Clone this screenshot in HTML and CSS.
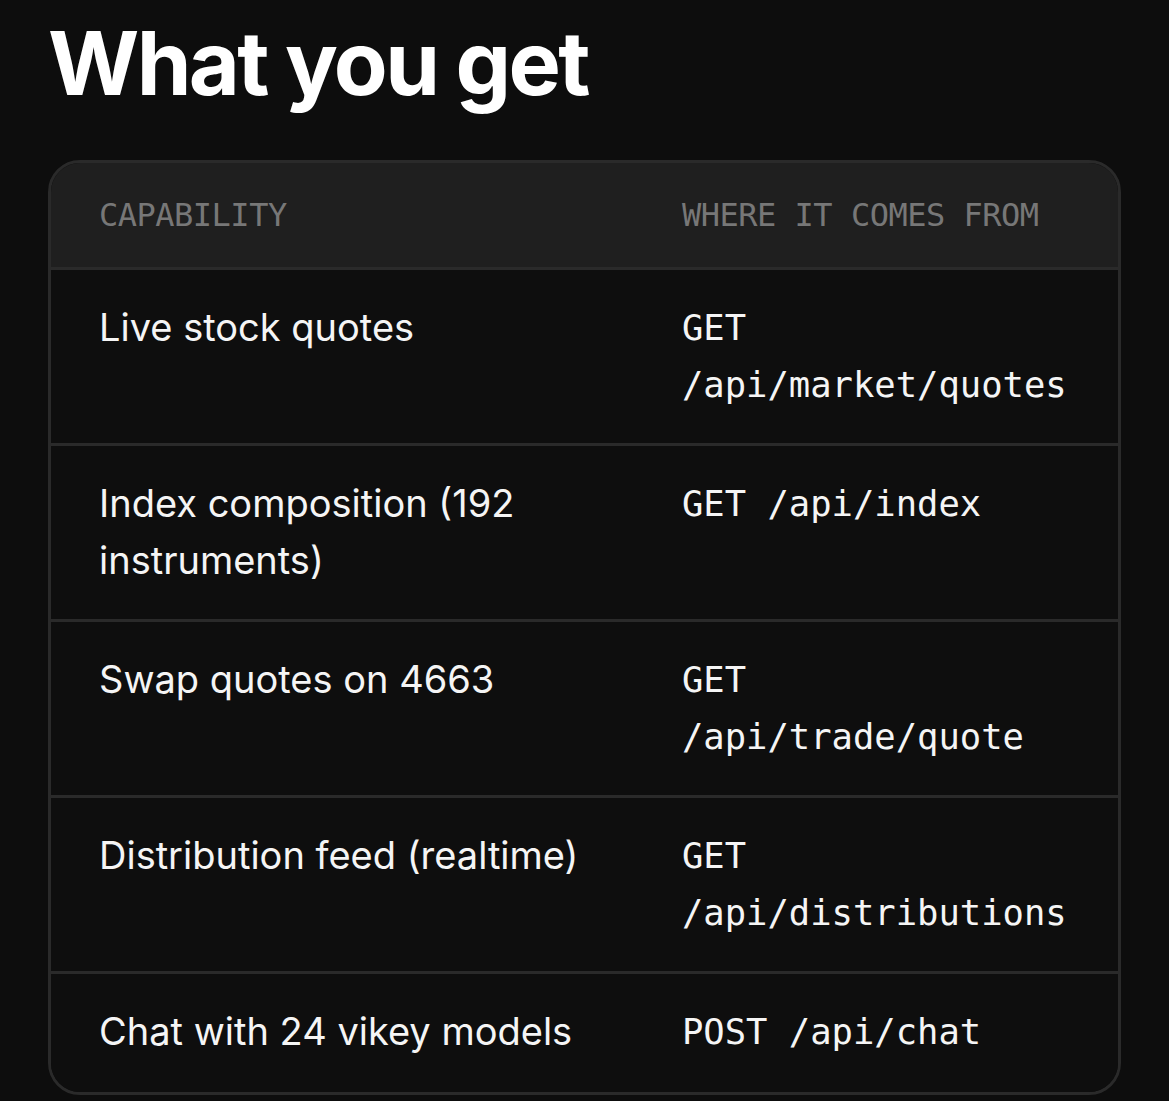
FILE: index.html
```html
<!DOCTYPE html>
<html lang="en">
<head>
    <meta charset="UTF-8">
    <meta name="viewport" content="width=device-width, initial-scale=1.0">
    <title>What you get</title>
    <link rel="stylesheet" href="styles.css">
</head>
<body>

    <div class="container">
        <h1>What you get</h1>

        <div class="table-wrap">
            <table class="caps">
                <thead>
                    <tr>
                        <th class="col-cap">Capability</th>
                        <th class="col-src">Where it comes from</th>
                    </tr>
                </thead>
                <tbody>
                    <tr>
                        <td>Live stock quotes</td>
                        <td class="code">GET /api/market/quotes</td>
                    </tr>
                    <tr>
                        <td>Index composition (192 instruments)</td>
                        <td class="code">GET /api/index</td>
                    </tr>
                    <tr>
                        <td>Swap quotes on 4663</td>
                        <td class="code">GET /api/trade/quote</td>
                    </tr>
                    <tr>
                        <td>Distribution feed (realtime)</td>
                        <td class="code">GET /api/distributions</td>
                    </tr>
                    <tr class="last">
                        <td>Chat with 24 vikey models</td>
                        <td class="code">POST /api/chat</td>
                    </tr>
                </tbody>
            </table>
        </div>
    </div>

</body>
</html>
```

FILE: styles.css
```css
body {
    margin: 0;
    background-color: #0d0d0d;
    color: #f5f5f5;
    font-family: 'Inter', 'Noto Sans', sans-serif;
}

.container {
    padding: 11px 48px 0 48px;
}

h1 {
    margin: 0 0 43px 0;
    font-size: 88px;
    font-weight: 700;
    line-height: 1.2;
    letter-spacing: -0.03em;
    color: #ffffff;
}

.table-wrap {
    border: 3px solid #2a2a2a;
    border-radius: 32px;
    overflow: hidden;
}

.caps {
    width: 100%;
    border-collapse: collapse;
    table-layout: fixed;
}

th, td {
    box-sizing: border-box;
}

.col-cap {
    width: 581px;
}

th {
    background-color: #1f1f1f;
    color: #777;
    font-family: 'DejaVu Sans Mono', 'Liberation Mono', monospace;
    font-size: 32px;
    font-weight: 400;
    letter-spacing: -0.5px;
    text-transform: uppercase;
    text-align: left;
    line-height: 48px;
    padding: 28px 40px 28px 48px;
}

td {
    vertical-align: top;
    font-size: 38px;
    line-height: 57px;
    padding: 29px 40px 30px 48px;
    border-top: 3px solid #2a2a2a;
    background-color: #0e0e0e;
}

td.code {
    font-family: 'DejaVu Sans Mono', 'Liberation Mono', monospace;
    font-size: 35.5px;
    padding-left: 50px;
    padding-right: 38px;
}

th.col-src {
    padding-left: 50px;
}

.last td {
    padding-bottom: 32px;
}
```
